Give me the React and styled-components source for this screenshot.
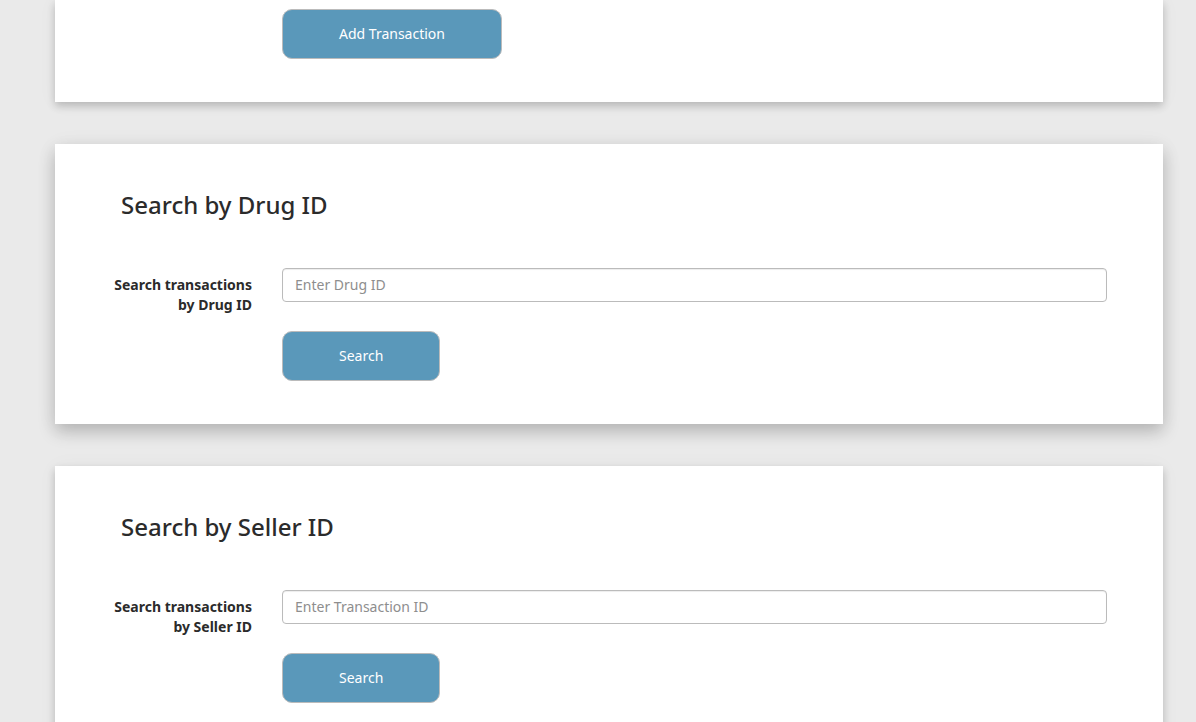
import React from 'react';
import styled, { createGlobalStyle } from 'styled-components';

const GlobalStyle = createGlobalStyle`
  *, *::before, *::after { box-sizing: border-box; }
  body {
    margin: 0;
    background: #eaeaea;
    color: #2b2b2b;
    font-family: "Noto Sans", sans-serif;
    font-size: 14px;
    line-height: 20px;
  }
`;

const Page = styled.main`
  display: flex;
  flex-direction: column;
  gap: 42px;
  height: 100vh;
  overflow: hidden;
  padding: 0 33px 0 55px;
`;

const Card = styled.section`
  flex: none;
  background: #fff;
  padding: ${(p) => (p.$continued ? '9px' : '44px')} 41px 43px;
  box-shadow: ${(p) =>
    p.$raised
      ? '0 8px 16px 0 rgba(0, 0, 0, 0.2), 0 2px 20px 0 rgba(0, 0, 0, 0.06)'
      : '0 4px 8px 0 rgba(0, 0, 0, 0.2), 0 1px 20px 0 rgba(0, 0, 0, 0.04)'};
`;

const Title = styled.h2`
  margin: 0 0 47px 25px;
  font-size: 24px;
  font-weight: 500;
  line-height: 33px;
`;

const Form = styled.form`
  display: grid;
  grid-template-columns: 2fr 10fr;
`;

const Label = styled.label`
  padding: 7px 15px 0;
  font-weight: 700;
  text-align: right;
`;

const Field = styled.div`
  grid-column: 2;
  padding: 0 15px;
`;

const TextInput = styled.input`
  display: block;
  width: 100%;
  height: 34px;
  padding: 5px 12px 7px;
  border: 1px solid #bbb;
  border-radius: 4px;
  background: #fff;
  box-shadow: inset 0 1px 1px rgba(0, 0, 0, 0.075);
  color: #555;
  font: inherit;
  &::placeholder { color: #8e8e8e; opacity: 1; }
`;

const Button = styled.button`
  height: 50px;
  margin-top: ${(p) => (p.$afterField ? '16px' : '0')};
  padding: 0 56px;
  border: 1px solid #bbb;
  border-radius: 10px;
  background: #5a98ba;
  color: #fff;
  font: inherit;
  cursor: pointer;
`;

function SearchCard({ id, title, label, placeholder, raised }) {
  return (
    <Card $raised={raised}>
      <Title>{title}</Title>
      <Form onSubmit={(e) => e.preventDefault()}>
        <Label htmlFor={id}>{label}</Label>
        <Field>
          <TextInput id={id} type="text" placeholder={placeholder} />
        </Field>
        <Field>
          <Button type="submit" $afterField>Search</Button>
        </Field>
      </Form>
    </Card>
  );
}

export default function App() {
  return (
    <>
      <GlobalStyle />
      <Page>
        <Card $continued>
          <Form onSubmit={(e) => e.preventDefault()}>
            <Field>
              <Button type="submit">Add Transaction</Button>
            </Field>
          </Form>
        </Card>
        <SearchCard
          id="drug-id"
          title="Search by Drug ID"
          label="Search transactions by Drug ID"
          placeholder="Enter Drug ID"
          raised
        />
        <SearchCard
          id="seller-id"
          title="Search by Seller ID"
          label="Search transactions by Seller ID"
          placeholder="Enter Transaction ID"
        />
      </Page>
    </>
  );
}
